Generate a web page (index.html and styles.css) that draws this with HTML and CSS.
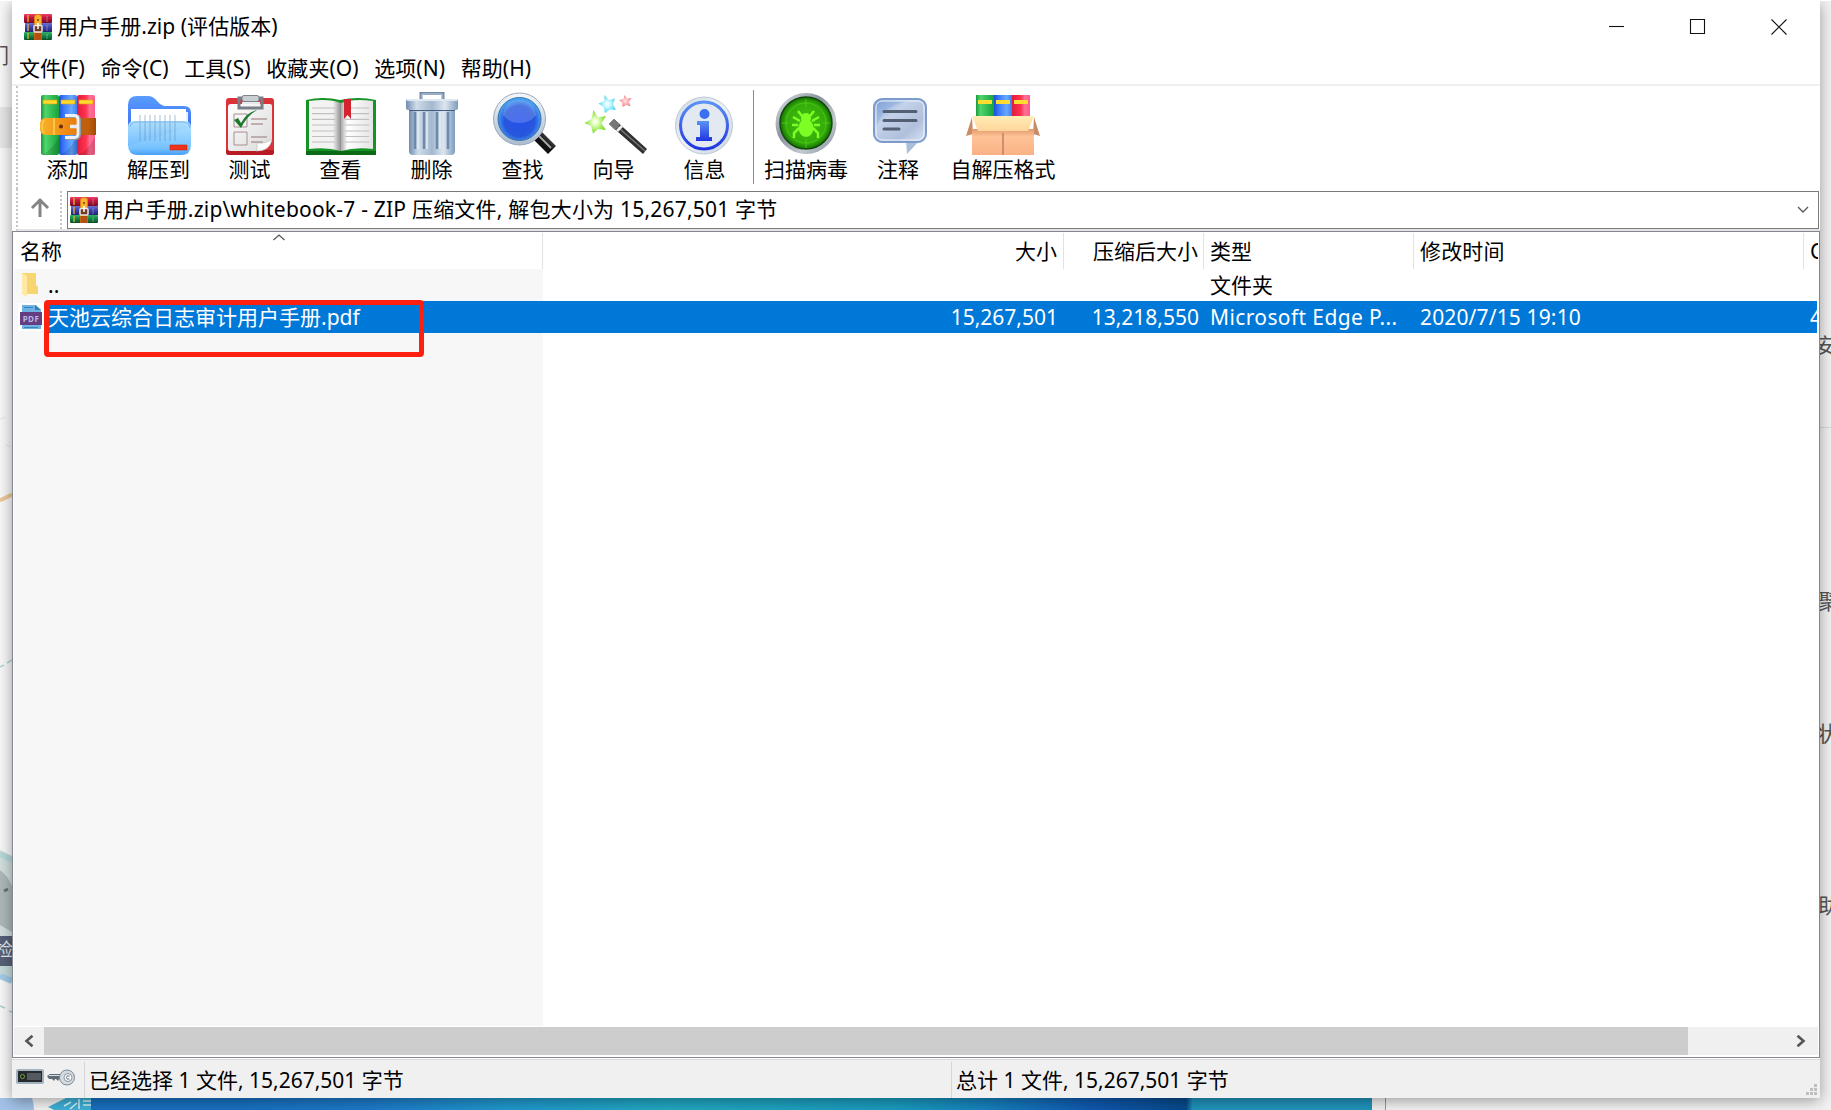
FILE: index.html
```html
<!DOCTYPE html>
<html lang="zh-CN">
<head>
<meta charset="utf-8">
<title>用户手册.zip (评估版本)</title>
<link rel="stylesheet" href="styles.css">
</head>
<body>
<svg width="0" height="0" class="defs" aria-hidden="true">
  <defs>
    <linearGradient id="gGreen"><stop offset="0" stop-color="#1d9a3a"/><stop offset=".25" stop-color="#4fd66c"/><stop offset="1" stop-color="#17a23d"/></linearGradient>
    <linearGradient id="gBlue"><stop offset="0" stop-color="#1d4fd8"/><stop offset=".3" stop-color="#3f7dff"/><stop offset=".7" stop-color="#67a9ff"/><stop offset="1" stop-color="#3c7cf0"/></linearGradient>
    <linearGradient id="gRed"><stop offset="0" stop-color="#e01c3c"/><stop offset=".5" stop-color="#ff3350"/><stop offset=".7" stop-color="#ff6f95"/><stop offset="1" stop-color="#ff5c88"/></linearGradient>
    <linearGradient id="gBelt"><stop offset="0" stop-color="#f7b529"/><stop offset=".3" stop-color="#f39a1c"/><stop offset=".7" stop-color="#e8780c"/><stop offset="1" stop-color="#a04a08"/></linearGradient>
    <linearGradient id="gFolderBack" x2="0" y2="1"><stop offset="0" stop-color="#5a9cff"/><stop offset="1" stop-color="#2c5be6"/></linearGradient>
    <linearGradient id="gFolder" x2="0" y2="1"><stop offset="0" stop-color="#b4e2ff"/><stop offset=".8" stop-color="#70c0ff"/><stop offset="1" stop-color="#3f9cf8"/></linearGradient>
    <linearGradient id="gPaper" x2="1" y2="1"><stop offset="0" stop-color="#fff"/><stop offset="1" stop-color="#dadada"/></linearGradient>
    <linearGradient id="gPageL"><stop offset="0" stop-color="#f4f4f4"/><stop offset=".75" stop-color="#f2f2f2"/><stop offset="1" stop-color="#8d8d8d"/></linearGradient>
    <linearGradient id="gPageR"><stop offset="0" stop-color="#aaa"/><stop offset=".2" stop-color="#fff"/><stop offset="1" stop-color="#e4e4e4"/></linearGradient>
    <linearGradient id="gSteel"><stop offset="0" stop-color="#6f8cb0"/><stop offset=".2" stop-color="#d0dce9"/><stop offset=".5" stop-color="#a3b8cf"/><stop offset=".75" stop-color="#dde6f0"/><stop offset="1" stop-color="#7f9bbd"/></linearGradient>
    <linearGradient id="gRim" x2="0" y2="1"><stop offset="0" stop-color="#f3f7fb"/><stop offset="1" stop-color="#abbccf"/></linearGradient>
    <radialGradient id="gLens" cx=".5" cy=".55" r=".55"><stop offset="0" stop-color="#2450ec"/><stop offset=".65" stop-color="#2857dc"/><stop offset="1" stop-color="#4bb2f8"/></radialGradient>
    <linearGradient id="gHandle" x2="1" y2="-1"><stop offset="0" stop-color="#111"/><stop offset=".5" stop-color="#888"/><stop offset="1" stop-color="#111"/></linearGradient>
    <linearGradient id="gInfo" x2="0" y2="1"><stop offset="0" stop-color="#5b92f5"/><stop offset="1" stop-color="#1f35e0"/></linearGradient>
    <linearGradient id="gDisc" x2="1" y2="1"><stop offset="0" stop-color="#cbd8e2"/><stop offset=".5" stop-color="#eef2f6"/><stop offset="1" stop-color="#c5d2dd"/></linearGradient>
    <linearGradient id="gMetal" x2="1" y2="1"><stop offset="0" stop-color="#e3e8ed"/><stop offset=".4" stop-color="#8a939e"/><stop offset=".7" stop-color="#c2c9d0"/><stop offset="1" stop-color="#7b8692"/></linearGradient>
    <radialGradient id="gScan"><stop offset="0" stop-color="#45c213"/><stop offset=".8" stop-color="#33aa08"/><stop offset="1" stop-color="#157004"/></radialGradient>
    <radialGradient id="gStarG"><stop offset="0" stop-color="#fff"/><stop offset=".25" stop-color="#e9ffc8"/><stop offset="1" stop-color="#79dc22"/></radialGradient>
    <radialGradient id="gStarB"><stop offset="0" stop-color="#fff"/><stop offset=".3" stop-color="#d6fbff"/><stop offset="1" stop-color="#4fd8f2"/></radialGradient>
    <radialGradient id="gStarR"><stop offset="0" stop-color="#ffe3e3"/><stop offset="1" stop-color="#f28489"/></radialGradient>
    <linearGradient id="gNote" x2="1" y2="1"><stop offset="0" stop-color="#7fa0d8"/><stop offset=".35" stop-color="#c3d2e9"/><stop offset=".7" stop-color="#b0c0dc"/><stop offset="1" stop-color="#dae4f6"/></linearGradient>
    <linearGradient id="gBox" x2="0" y2="1"><stop offset="0" stop-color="#e39a6b"/><stop offset=".3" stop-color="#ffc398"/><stop offset="1" stop-color="#f9b184"/></linearGradient>
    <linearGradient id="gFlap" x2="0" y2="1"><stop offset="0" stop-color="#ffedb4"/><stop offset="1" stop-color="#ffd59b"/></linearGradient>
    <linearGradient id="hRed" x2="0" y2="1"><stop offset="0" stop-color="#f0406a"/><stop offset=".4" stop-color="#c01840"/><stop offset="1" stop-color="#7a0822"/></linearGradient>
    <linearGradient id="hBlue" x2="0" y2="1"><stop offset="0" stop-color="#6a72d8"/><stop offset=".5" stop-color="#3c3fa8"/><stop offset="1" stop-color="#23236f"/></linearGradient>
    <linearGradient id="hGreen" x2="0" y2="1"><stop offset="0" stop-color="#35b368"/><stop offset=".5" stop-color="#138545"/><stop offset="1" stop-color="#074d24"/></linearGradient>
    <symbol id="rar" viewBox="0 0 28 26">
      <rect x="0" y="0" width="28" height="9" rx="1" fill="url(#hRed)"/>
      <rect x="1" y="9" width="27" height="9" fill="url(#hBlue)"/>
      <rect x="0" y="18" width="28" height="8" rx="1" fill="url(#hGreen)"/>
      <path d="M4 1v7M4 10v7M4 19v6" stroke="#e3b52c" stroke-width="1.3"/>
      <path d="M23 2v6M23 11v6M23 20v5" stroke="#ffffff55"/>
      <path d="M10 3q0-3 4-3t4 3v23h-8z" fill="#dd7d16"/>
      <path d="M11 3q0-2 3-2t3 2v8h-6z" fill="#f8b230"/>
      <path d="M10.5 19h7v7h-7z" fill="#b45110"/>
      <rect x="10" y="11.500" width="8" height="6.500" rx="1" fill="#733b20" stroke="#e6e6e6" stroke-width="1.500"/>
      <path d="M14 9v6" stroke="#fff" stroke-width="1.500"/><circle cx="14" cy="6" r="1" fill="#754000"/>
    </symbol>
  </defs>
</svg>

<div class="desktop">
  <div class="page-left">
    <span class="peek peek-tab">们</span>
    <span class="band"></span>
    <svg class="art" width="12" height="1110" viewBox="0 0 12 1110">
      <path d="M0 500.500l12-6" stroke="#edc797" stroke-width="4"/>
      <path d="M0 667l4-2M7 663l5-3" stroke="#afd5d8" stroke-width="1.5"/>
      <path d="M0 419l6-2M6 445l5 2" stroke="#e2e4e6"/>
      <path d="M0 850l12 6v114H0z" fill="#d2dfdd"/>
      <path d="M0 870q8 6 12 16v46l-12-7z" fill="#adb9b9"/>
      <path d="M0 854l12 6" stroke="#b5d9d8" stroke-width="6"/>
      <path d="M4 891l4-2" stroke="#68707c" stroke-width="3"/>
      <path d="M0 936h12v30H0z" fill="#566078"/>
      <path d="M0 966h12v14l-12-4z" fill="#c8dcdc"/>
      <path d="M0 976l12 5" stroke="#a3cbea" stroke-width="6"/>
      <path d="M0 1006l5 2M9 1011l3 1" stroke="#a9d0cf" stroke-width="1.5"/>
    </svg>
    <span class="peek peek-label">检</span>
  </div>
  <div class="page-right">
    <span class="peek r1">安</span>
    <span class="rule"></span>
    <span class="peek r2">聚</span>
    <span class="peek r3">状</span>
    <span class="peek r4">助</span>
  </div>
  <div class="page-bottom">
    <svg width="91" height="12" viewBox="0 0 91 12"><path d="M0 0h32q2 6 2 12H0z" fill="#a3c2e8"/><path d="M48 9l18-9h25v12H54z" fill="#3fb2da"/><path d="M64 8l7-4M70 11l7-6M79 1v10M83 3h8M83 7h8" stroke="#d9f4fb" stroke-width="1.500"/></svg>
    <div class="banner"></div>
    <div class="gutter"></div>
  </div>

  <main class="window">
    <header class="titlebar">
      <svg class="rar" width="28" height="26"><use href="#rar"/></svg>
      <h1>用户手册.zip (评估版本)</h1>
      <div class="controls">
        <svg width="16" height="16" viewBox="0 0 16 16"><path d="M0 7.500h15"/></svg>
        <svg width="16" height="16" viewBox="0 0 16 16"><path d="M.5 .5h14v14h-14z"/></svg>
        <svg width="16" height="16" viewBox="0 0 16 16"><path d="M.5 .5l15 15M15.5 .5l-15 15"/></svg>
      </div>
    </header>
    <nav class="menu">
      <span>文件(F)</span><span>命令(C)</span><span>工具(S)</span><span>收藏夹(O)</span><span>选项(N)</span><span>帮助(H)</span>
    </nav>
    <section class="toolbar">
      <div class="tool"><svg viewBox="0 0 72 66">
        <rect x="9" y="4" width="18" height="60" rx="2" fill="url(#gGreen)"/><rect x="27" y="4" width="18" height="60" rx="2" fill="url(#gBlue)"/><rect x="45" y="4" width="18" height="60" rx="2" fill="url(#gRed)"/>
        <path d="M10 64q10-5 17-18v18zM28 64q10-5 17-18v18zM46 64q10-5 17-18v18z" fill="#0002"/>
        <path d="M11 9h14v4H11zM29 9h14v4H29zM47 9h14v4H47z" fill="#ffd92e" stroke="#d99e10" stroke-width=".6"/>
        <path d="M8 32q1-5 6-5h50v17H14q-5 0-6-5z" fill="url(#gBelt)"/><path d="M22 27v17" stroke="#fbd050" stroke-width="1.5"/><path d="M12 29q-4 6 0 13" stroke="#ffd75c" fill="none"/>
        <circle cx="29" cy="35.500" r="2" fill="#6a2d00"/><path d="M48 27h8v17h-8z" fill="#c05f0d"/>
        <path d="M34 25h9q4 0 4 4v14q0 4-4 4h-9" fill="none" stroke="#8d98a5" stroke-width="4"/><path d="M33 24.500h9q4 0 4 4v14q0 4-4 4h-9" fill="none" stroke="#eef1f5" stroke-width="2.800"/><path d="M38 35.500h8" stroke="#e8edf3" stroke-width="3.500"/></svg><span>添加</span></div>
      <div class="tool"><svg viewBox="0 0 72 66">
        <path d="M5 55V14q0-9 9-9h11q5 0 9 5 3 4 7 5h20q7 0 7 7v14z" fill="url(#gFolderBack)"/><path d="M8 18h55v14H8z" fill="#fff"/><path d="M63 21h2v15h-2z" fill="#e5efff"/>
        <path d="M5 36q0-6 6-6h50q7 0 7 7v17q0 10-10 10H15Q5 64 5 54z" fill="url(#gFolder)" opacity=".96"/>
        <path d="M17 24v26M22 24v26M27 24v26M32 24v26M37 24v26M42 24v26M47 24v26M52 24v26" stroke="#5d8cb0" stroke-width="1.500" opacity=".35"/><path d="M7 36q1-5 6-5h47q6 0 7 6" stroke="#74b7ed" fill="none"/><path d="M47 54h17v5H47z" fill="#ef321b" stroke="#c82410" stroke-width=".6"/></svg><span>解压到</span></div>
      <div class="tool"><svg viewBox="0 0 72 66">
        <rect x="12" y="7" width="48" height="57" rx="3" fill="#dc333a"/><path d="M12 59h48v2q0 3-3 3H15q-3 0-3-3z" fill="#b71c25"/>
        <path d="M17 13h39q2 0 2 2v33q-2 13-16 12H16q-2 0-2-3V16q0-3 3-3z" fill="url(#gPaper)"/><path d="M58 48q-5 5-15 4 1 6-1 8 14 0 16-12z" fill="#fff" stroke="#bbb" stroke-width=".6"/>
        <path d="M25 7h23v10H25z" fill="none" stroke="#777f87" stroke-width="3"/><rect x="28" y="4.500" width="17" height="6" rx="2" fill="#c9ced4" stroke="#7b838b"/><path d="M28 12h18" stroke="#e7e9ec" stroke-width="2"/>
        <path d="M20 32V23h13v13H20zM20 41h13v13H20z" fill="none" stroke="#aa8e8e"/><path d="M37 28h16M37 33h12M37 46h16M37 51h12" stroke="#b19a9a" stroke-width="1.300"/><path d="M20 29l4-2 3 5q6-11 16-13-10 6-16 18z" fill="#1d7b2e"/></svg><span>测试</span></div>
      <div class="tool"><svg viewBox="0 0 72 66">
        <path d="M1 9q17-4 34 0 18-4 36 0v55H1z" fill="#159325"/><path d="M1 60h70v4H1z" fill="#0d6b18"/><path d="M4 10q20-3 32 2v48q-14-4-32-2z" fill="url(#gPageL)"/><path d="M36 12q13-5 32-2v48q-18-2-32 2z" fill="url(#gPageR)"/>
        <path d="M7 17h23M7 22.700h23M7 28.400h23M7 34h23M7 40h23M7 45.500h23M7 51h23M40 17h24M40 22.700h24M40 28.400h24M40 34h24M40 40h24M40 45.500h24M40 51h24" stroke="#c0c0c0" stroke-width="1.200"/><path d="M39 8h7v20l-3.500-4-3.500 4z" fill="#d42430"/></svg><span>查看</span></div>
      <div class="tool"><svg viewBox="0 0 72 66">
        <path d="M25 9V2.500h22V9" fill="none" stroke="#738ba9" stroke-width="3"/><path d="M26 8V3h20v5" fill="none" stroke="#c1cfdf"/>
        <path d="M13 18h46v42q0 4-4 4H17q-4 0-4-4z" fill="url(#gSteel)"/><path d="M19 21v37M28 21v37M41 21v37M52 21v37" stroke="#6d89ab" stroke-width="2.500"/><path d="M22 21v37M31 21v37M44 21v37" stroke="#e5edf5" stroke-width="1.500"/>
        <rect x="10" y="8" width="52" height="11" rx="2" fill="url(#gSteel)"/><path d="M11 9h50" stroke="#dfe8f1" stroke-width="2"/><path d="M13 19.500h46" stroke="#435e80"/></svg><span>删除</span></div>
      <div class="tool"><svg viewBox="0 0 72 66">
        <path d="M46 48l8-8 15 15-8 8z" fill="url(#gHandle)"/><path d="M50 43l14 14" stroke="#a4a8ad" stroke-width="2"/><circle cx="32.500" cy="28" r="26" fill="url(#gRim)" stroke="#9aaabd"/><circle cx="32.500" cy="28" r="21.500" fill="url(#gLens)" stroke="#376ea9"/><path d="M16 24q2-15 16.500-15T49 24q-6 8-16.500 8T16 24z" fill="#fff" opacity=".18"/></svg><span>查找</span></div>
      <div class="tool"><svg viewBox="0 0 72 66">
        <path d="M31 33l5-5 33 30-4 5z" fill="#303030"/><path d="M34 31l33 29" stroke="#777" stroke-width="1.500"/><path d="M31 33l5-5 6 5.500-5 5.500z" fill="#777"/><path d="M38 39l5-5 2 2-5 5z" fill="#eee"/>
        <path d="M15.500 19l4.500 7.500 8-1.500-4.500 7.500L28 39l-8-1-5 4.500-2-7.500-6.500-3 7-4z" fill="url(#gStarG)"/><path d="M26.500 4l4.500 5 6-1.500-2 6 3 5.500-6-.5-5 3.500-1.500-6-5-3.500 5.500-2.500z" fill="url(#gStarB)"/><path d="M46.500 4l2.500 3.500 4.500-.5-2.500 4 1.500 4.500-4-1.500-4 2-.5-4.500-3-2.500 4.500-1z" fill="url(#gStarR)"/></svg><span>向导</span></div>
      <div class="tool"><svg viewBox="0 0 72 66">
        <circle cx="35" cy="34.500" r="28.500" fill="url(#gDisc)" stroke="#bdcad5"/><circle cx="35" cy="34.500" r="23.500" fill="#e3e9f0" stroke="url(#gInfo)" stroke-width="3"/><circle cx="35.500" cy="23" r="5" fill="#3a70f0"/><path d="M28 30h12v16h3v4H27v-4h4V34h-3z" fill="url(#gInfo)"/></svg><span>信息</span></div>
      <div class="divider"></div>
      <div class="tool scan"><svg viewBox="0 0 72 66">
        <circle cx="36" cy="32.500" r="30.500" fill="url(#gMetal)"/><circle cx="36" cy="32" r="26" fill="url(#gScan)" stroke="#124a0c" stroke-width="1.500"/><circle cx="36" cy="32" r="20" fill="none" stroke="#56d21d" opacity=".6"/><path d="M36 8v8M36 48v9M12 32h7M53 32h7" stroke="#5bd61f" opacity=".7"/>
        <g fill="none" stroke="#7dff26" stroke-width="2.500"><path d="M28 20l4 5M44 20l-4 5M30 30l-7-4M42 30l7-4M28 34h-6M44 34h6M29 37l-5 5v5M43 37l5 5v5"/></g><ellipse cx="36" cy="37" rx="7.500" ry="9" fill="#7dff26"/><circle cx="36" cy="27" r="5" fill="#7dff26"/></svg><span>扫描病毒</span></div>
      <div class="tool note"><svg viewBox="0 0 72 66">
        <path d="M44 48h15L45 63z" fill="#aabfd9"/><rect x="12" y="8" width="52" height="43" rx="8" fill="url(#gNote)" stroke="#7d9bcb" stroke-width="2"/><path d="M14 39q5-26 34-29H20q-6 0-6 6z" fill="#7097d4" opacity=".3"/><rect x="14" y="10" width="48" height="39" rx="6" fill="none" stroke="#edf3fc"/><path d="M22 20.500h32M22 29.500h32M22 38h15" stroke="#535f72" stroke-width="3" stroke-linecap="round"/></svg><span>注释</span></div>
      <div class="tool sfx"><svg viewBox="0 0 72 66">
        <path d="M9 4h18v24H9z" fill="url(#gGreen)"/><path d="M27 4h18v24H27z" fill="url(#gBlue)"/><path d="M45 4h18v24H45z" fill="url(#gRed)"/><path d="M11 9h14v4H11zM29 9h14v4H29zM47 9h14v4H47z" fill="#ffdc31"/>
        <path d="M5 26L-1 45l7-2zM67 26l6 19-7-2z" fill="#c98c66"/><path d="M5 38h62v26H5z" fill="url(#gBox)"/><path d="M36 42v22" stroke="#bb8263" stroke-width="1.500"/><path d="M5 25h62l-6 15H11z" fill="url(#gFlap)"/></svg><span>自解压格式</span></div>
    </section>
    <section class="address">
      <div class="up"><svg width="20" height="21" viewBox="0 0 20 21"><path d="M10 20V3M2 11l8-8 8 8" fill="none" stroke="#858585" stroke-width="3"/></svg></div>
      <div class="path">
        <svg class="rar" width="28" height="26"><use href="#rar"/></svg>
        <span>用户手册.zip\whitebook-7 - ZIP 压缩文件, 解包大小为 15,267,501 字节</span>
        <svg class="chev" width="12" height="8" viewBox="0 0 12 8"><path d="M1 1l5 5 5-5" fill="none" stroke="#555" stroke-width="1.300"/></svg>
      </div>
    </section>
    <section class="list">
      <div class="row head">
        <div class="c-name">名称<svg class="sort" width="12" height="7" viewBox="0 0 12 7"><path d="M.5 6L6 1l5.500 5" fill="none" stroke="#555" stroke-width="1.200"/></svg></div>
        <div class="num c-size">大小</div><div class="num c-packed">压缩后大小</div><div class="c-type">类型</div><div class="c-date">修改时间</div><div class="c-crc">C</div>
      </div>
      <div class="row">
        <div class="c-name"><svg width="16" height="26" viewBox="0 0 16 26"><path d="M0 1h14v12l2 2v7H3z" fill="#f7d671"/><path d="M0 1l5 3v21l-5-3z" fill="#ffe9a4"/></svg><span class="dots">..</span></div>
        <div class="c-size"></div><div class="c-packed"></div><div class="c-type">文件夹</div>
      </div>
      <div class="row selected">
        <div class="c-name"><div class="fileicon"><svg width="24" height="28" viewBox="0 0 24 28"><path d="M4 2h14l5 5v19H4z" fill="#6eb3e4"/><path d="M17 2v5h6z" fill="#2f83b9"/><path d="M6 4.500h9M6 24.500h14" stroke="#3a83b5"/><rect x="2" y="9" width="22" height="13" fill="#653e82"/><text x="13" y="18.800" text-anchor="middle">PDF</text></svg></div><span class="file">天池云综合日志审计用户手册.pdf</span></div>
        <div class="num c-size">15,267,501</div><div class="num c-packed">13,218,550</div><div class="c-type ms">Microsoft Edge P...</div><div class="c-date">2020/7/15 19:10</div><div class="c-crc">4</div>
      </div>
      <div class="empty"></div>
      <div class="scrollbar">
        <div class="arrow"><svg width="10" height="12" viewBox="0 0 10 12"><path d="M8.500 .7L2.500 6l6 5.300" /></svg></div>
        <div class="thumb"></div>
        <div class="arrow end"><svg width="10" height="12" viewBox="0 0 10 12"><path d="M1.500 .7l6 5.300-6 5.300" /></svg></div>
      </div>
    </section>
    <footer class="status">
      <div class="icons">
        <svg width="28" height="15" viewBox="0 0 28 15"><rect x="1" y="1" width="26" height="13" rx="1" fill="#26292d" stroke="#a2b2bf" stroke-width="2"/><path d="M11 4h14v7H11z" fill="#555a60"/><circle cx="6.500" cy="7.500" r="2" fill="#122c0b" stroke="#74a552"/></svg>
        <svg width="28" height="17" viewBox="0 0 28 17"><path d="M0 7l3-2h11v5h-2l-1 2-2-2H8l-1 2-2-2H2z" fill="#5f6b74"/><path d="M2 6.500h12" stroke="#dae1e6"/><circle cx="20" cy="8.500" r="7.500" fill="#d4dbe0" stroke="#7b8892"/><circle cx="21" cy="8.500" r="4" fill="#f8f8f8" stroke="#8794a0"/><path d="M22.500 7q-3-1-3 1.500t3 1.500" fill="none" stroke="#66727d"/></svg>
      </div>
      <div class="chosen">已经选择 1 文件, 15,267,501 字节</div>
      <div class="total">总计 1 文件, 15,267,501 字节</div>
      <svg class="size-grip" width="12" height="12" viewBox="0 0 12 12"><path d="M8 0h3v3H8zM4 4h3v3H4zM8 4h3v3H8zM0 8h3v3H0zM4 8h3v3H4zM8 8h3v3H8z" fill="#bfbfbf"/></svg>
    </footer>
    <div class="highlight"></div>
  </main>
</div>
</body>
</html>
```
FILE: styles.css
```css
* { box-sizing: border-box; }
body {
  margin: 0;
  font: 21px/30px "Noto Sans", "Noto Sans CJK SC", sans-serif;
  color: #000;
  white-space: nowrap;
}
svg { display: block; flex: none; overflow: visible; }
.defs { position: absolute; }
.desktop {
  position: relative;
  width: 1831px;
  height: 1110px;
  overflow: hidden;
  background: #f6f6f6;
  border-top: 1px solid #fff;
}
.desktop::before {
  content: "";
  position: absolute;
  left: 0;
  top: -1px;
  width: 1212px;
  height: 1px;
  background: #afa3a5;
}
.page-left, .page-right { position: absolute; top: -1px; height: 1110px; width: 12px; overflow: hidden; }
.page-left { left: 0; background: #f8f8f8; }
.page-right { right: 0; background: #f3f3f3; }
.art { position: absolute; left: 0; top: 0; }
.band { position: absolute; left: 0; top: 107px; width: 12px; height: 41px; background: #e6e6e6; }
.peek { position: absolute; color: #555; }
.peek-tab { left: -12px; top: 40px; }
.peek-label { left: -5px; top: 934px; font-size: 18px; color: #e8ebef; }
.rule { position: absolute; left: 0; top: 427px; width: 12px; height: 1px; background: #d5dbea; }
.r1 { left: -4px; top: 330px; }
.r2 { left: -1px; top: 586px; }
.r3 { left: -2px; top: 718px; }
.r4 { left: -1px; top: 890px; }
.page-bottom { position: absolute; left: 0; bottom: 0; width: 1831px; height: 12px; display: flex; }
.banner {
  width: 1281px;
  background: linear-gradient(90deg, #1972c3 0 12%, #1d7ccb 22%, #2099cf 32%, #21aac4 45%, #1a9dc0 63%, #1682bf 70%, #105ab2 78%, #074a8b 85.500%, #2095be 86%);
}
.gutter { width: 14px; border-right: 1px solid #999; background: #f3f3f3; }

.window {
  position: absolute;
  left: 12px;
  top: 0;
  width: 1808px;
  height: 1097px;
  display: flex;
  flex-direction: column;
  background: #fff;
  box-shadow: 0 3px 14px rgba(0, 0, 0, .38);
}
.titlebar { height: 52px; padding: 0 33px 0 12px; display: flex; align-items: center; gap: 5px; }
.titlebar h1 { margin: -2px 0 0; font-size: 21px; line-height: 30px; font-weight: 400; letter-spacing: .05px; }
.controls { margin-left: auto; display: flex; gap: 65px; }
.controls path { fill: none; stroke: #111; stroke-width: 1.1; }
.menu { height: 33px; padding: 0 0 0 7px; display: flex; gap: 15.5px; border-bottom: 2px solid #f0f0f0; letter-spacing: .08px; }
.toolbar { height: 103px; margin-left: 4px; padding: 5px 0 0 4px; display: flex; border-left: 2px dotted #c6c6c6; }
.tool { width: 91px; display: flex; flex-direction: column; align-items: center; }
.tool svg { width: 72px; height: 66px; }
.tool span { line-height: 28px; margin-top: -2px; }
.divider { width: 1px; height: 94px; margin: -1px 0 0 3px; background: #8d8d8d; }
.scan { width: 104px; }
.note { width: 80px; }
.sfx { width: 130px; }
.address { height: 42px; margin-left: 4px; display: flex; border-left: 2px dotted #c6c6c6; border-bottom: 2px solid #e4e4e4; padding: 2px 1px 0 0; }
.up { width: 44px; padding: 6px 0 0 12px; border-right: 2px dotted #c6c6c6; }
.path { flex: 1; height: 38px; margin-left: 5px; padding: 0 9px 0 2px; display: flex; align-items: center; border: 1px solid #7a7a7a; }
.path span { margin: -2px 0 0 5px; letter-spacing: .21px; }
.chev { margin-left: auto; }

.list { height: 827px; display: flex; flex-direction: column; border: 1px solid #828790; padding: 1px; }
.row { display: flex; height: 32px; flex: none; align-items: center; }
.row > div { flex: none; height: 100%; display: flex; align-items: center; padding-bottom: 1px; }
.row.head { height: 36px; }
.row.head > div { border-right: 1px solid #e2e2e2; }
.row > .c-name { position: relative; width: 529px; padding-left: 6px; }
.row:not(.head) > .c-name { background: #f7f7f7; padding-left: 8px; }
.row > .c-size { width: 521px; padding-right: 6px; }
.row > .c-packed { width: 140px; padding-right: 5px; }
.row > .c-type { width: 210px; padding-left: 6px; }
.row > .ms { letter-spacing: .38px; }
.row > .c-date { width: 390px; padding-left: 6px; letter-spacing: .14px; }
.row > .c-crc { flex: 1; width: 13px; padding-left: 6px; overflow: hidden; }
.row.head > .c-crc { border-right: 0; }
.num { justify-content: flex-end; }
.sort { position: absolute; left: 259px; top: 1px; }
.dots { margin-left: 10px; }
.row.selected { color: #fff; background: #0078d7; margin-right: 1px; }
.row.selected > .c-name { padding-left: 4px; background: linear-gradient(90deg, #f7f7f7 33px, #0078d7 33px); }
.fileicon { width: 26px; height: 28px; background: #fff; }
.fileicon text { font: bold 8px "Noto Sans", sans-serif; fill: #b7b8e2; letter-spacing: .5px; }
.file { margin-left: 4px; }
.empty { flex: 1; background: linear-gradient(90deg, #f7f7f7 529px, #fff 529px); }
.scrollbar { height: 29px; margin-top: 1px; display: flex; background: #f0f0f0; border-bottom: 1px solid #fff; }
.arrow { width: 30px; display: flex; align-items: center; justify-content: center; }
.arrow path { fill: none; stroke: #555; stroke-width: 2.6; }
.end { margin: 0 2px 0 auto; }
.thumb { width: 1644px; background: #cdcdcd; }
.status { flex: 1; display: flex; background: #f0f0f0; border-top: 1px solid #d7d7d7; padding-top: 2px; margin-top: 1px; position: relative; }
.icons { width: 72px; padding: 7px 0 0 4px; display: flex; gap: 3px; }
.status > .chosen { width: 867px; }
.chosen, .total { border-left: 1px solid #d5d5d5; padding: 3px 0 0 4px; height: 36px; }
.size-grip { position: absolute; right: 2px; bottom: 2px; }
.highlight { position: absolute; left: 32px; top: 299px; width: 380px; height: 57px; border: 5px solid #ff1f0f; border-radius: 4px; }
```
